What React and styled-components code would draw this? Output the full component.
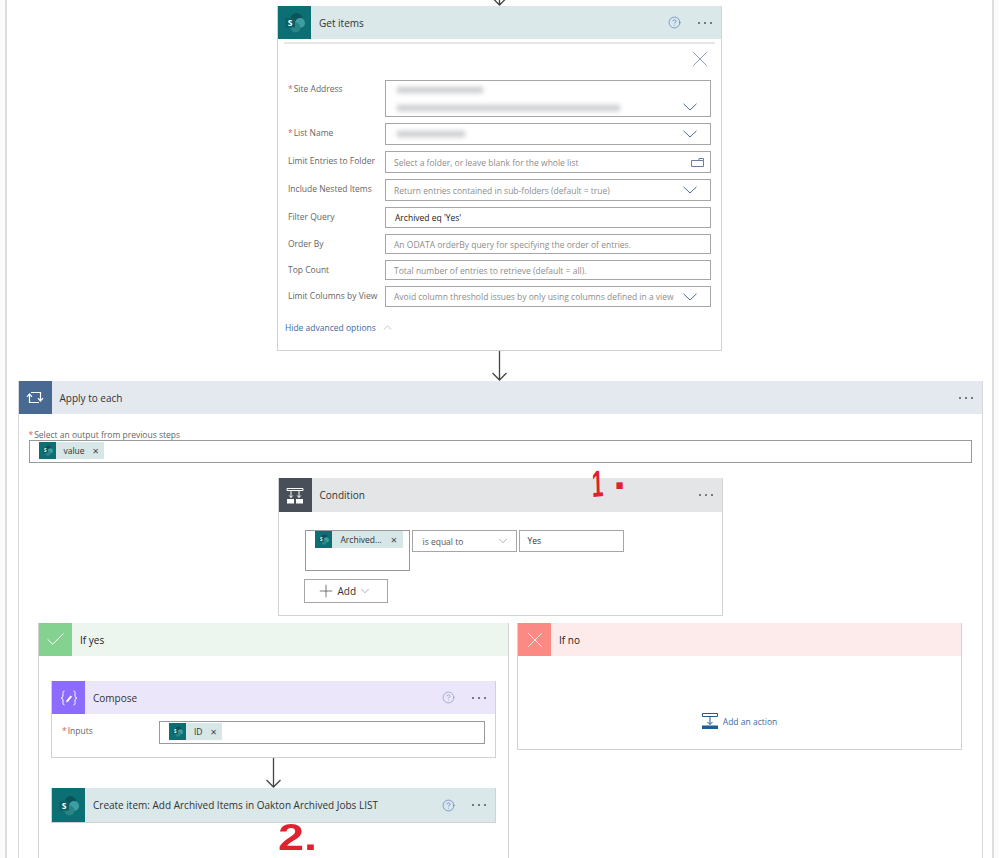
import styled, { createGlobalStyle } from "styled-components";
import { Check, ChevronDown, ChevronUp, CircleHelp, Plus, X } from "lucide-react";

const GlobalStyle = createGlobalStyle`
	html, body {
		margin: 0;
		padding: 0;
		background-color: #fbfbfb;
		font-family: "Open Sans", "Noto Sans", sans-serif;
		color: #333;
		overflow: hidden;
	}
`;

const SharePointIcon = ({ size }) => (
	<svg width={size} height={size} viewBox="0 0 33 33">
		<rect width="33" height="33" fill="#0c6f73" />
		<circle cx="18.5" cy="12.5" r="5.5" fill="#0a5358" />
		<circle cx="22" cy="17" r="5" fill="#3f9ea2" />
		<circle cx="17.5" cy="21.5" r="5" fill="#2a8589" />
		<rect x="7.5" y="12" width="9.5" height="9.5" fill="#0b5f63" />
		<text x="12.2" y="20" fontSize="8.5" fontWeight="700" fill="#fff" textAnchor="middle" fontFamily="Open Sans">S</text>
	</svg>
);

const LoopIcon = () => (
	<svg width="18" height="15" viewBox="0 0 18 15" fill="none" stroke="#fff" strokeWidth="1.2">
		<path d="M5 2.5h9.5v8" />
		<path d="M12 8.2l2.5 2.8 2.5-2.8" />
		<path d="M13 12.5H3.5v-8" />
		<path d="M1 6.8l2.5-2.8 2.5 2.8" />
	</svg>
);

const ConditionIcon = () => (
	<svg width="18" height="17" viewBox="0 0 18 17" fill="none" stroke="#fff" strokeWidth="1">
		<path d="M1 1.5h16v2H1z" />
		<path d="M5 3.5v7M13 3.5v7M3.2 8.5L5 10.5l1.8-2M11.2 8.5l1.8 2 1.8-2" />
		<rect x="1" y="12" width="7" height="4.5" fill="#fff" stroke="none" />
		<rect x="10" y="12" width="7" height="4.5" fill="#fff" stroke="none" />
	</svg>
);

const ComposeIcon = () => (
	<svg width="18" height="16" viewBox="0 0 18 16" fill="none" stroke="#fff" strokeWidth="1">
		<path d="M4.5 1C2.5 1 3 3 3 5S2.5 8 1 8c1.5 0 2 1 2 3s-.5 4 1.5 4" />
		<path d="M13.5 1c2 0 1.5 2 1.5 4s.5 3 2 3c-1.500 0-2 1-2 3s.5 4-1.500 4" />
		<path d="M6.500 10.500l4-5 1.500 1.200-4 5-2 .5z" fill="#fff" stroke="none" />
	</svg>
);

const FolderIcon = () => (
	<svg width="13" height="9" viewBox="0 0 13 9" fill="none" stroke="#6d7f96" strokeWidth="1">
		<path d="M.5 2.500h12v6H.5z" />
		<path d="M8 2.500V.5h4.500v2" />
	</svg>
);

const AddActionIcon = () => (
	<svg width="16" height="16" viewBox="0 0 16 16" fill="none" stroke="#1f5b94" strokeWidth="1">
		<path d="M.5 .5h15v3H.5z" />
		<path d="M8 3.500v8M5.500 9L8 11.500 10.500 9" />
		<rect y="12.500" width="16" height="3.500" fill="#1f5b94" stroke="none" />
	</svg>
);

const Arrow = ({ height }) => (
	<Connector $height={height}>
		<svg width="17" height="30" viewBox="0 0 17 30" fill="none" stroke="#444" strokeWidth="1.300">
			<path d="M8.500 0v29M1.500 22l7 7 7-7" />
		</svg>
	</Connector>
);

const Dots = () => (
	<MoreDots>
		<i />
		<i />
		<i />
	</MoreDots>
);

const Chevron = () => (
	<FieldChevron>
		<svg width="14" height="8" viewBox="0 0 14 8" fill="none" stroke="#4e6e96" strokeWidth="1">
			<path d="M.5 .8L7 7l6.500-6.200" />
		</svg>
	</FieldChevron>
);

const Token = ({ children, wide }) => (
	<TokenChip $wide={wide}>
		<SharePointIcon size={17} />
		<TokenText>{children}</TokenText>
		<TokenClose>×</TokenClose>
	</TokenChip>
);

const App = () => {
	return (
		<>
			<GlobalStyle />
			<Frame>
				<Arrow height={6} />
				<Card $width={445}>
					<CardHeader $bg="#dae8e9">
						<IconBox $bg="#0c6f73">
							<SharePointIcon size={33} />
						</IconBox>
						<CardTitle>Get items</CardTitle>
						<HelpButton>
							<CircleHelp size={13} strokeWidth={1.2} color="#4a72c4" />
						</HelpButton>
						<Dots />
					</CardHeader>
					<Divider />
					<CloseRow>
						<X size={26} strokeWidth={0.6} color="#4e6e96" />
					</CloseRow>
					<Form>
						<FormRow>
							<FieldLabel $top={2.5}>
								<Required>*</Required>Site Address
							</FieldLabel>
							<Field $height={37}>
								<BlurStack>
									<BlurBar $width={86} />
									<BlurBar $width={223} />
								</BlurStack>
								<SiteChevron>
									<Chevron />
								</SiteChevron>
							</Field>
						</FormRow>
						<FormRow>
							<FieldLabel>
								<Required>*</Required>List Name
							</FieldLabel>
							<Field $height={22}>
								<BlurBar $width={68} />
								<Chevron />
							</Field>
						</FormRow>
						<FormRow>
							<FieldLabel>Limit Entries to Folder</FieldLabel>
							<Field $height={22}>
								<Placeholder>Select a folder, or leave blank for the whole list</Placeholder>
								<FieldIcon>
									<FolderIcon />
								</FieldIcon>
							</Field>
						</FormRow>
						<FormRow>
							<FieldLabel>Include Nested Items</FieldLabel>
							<Field $height={22}>
								<Placeholder>Return entries contained in sub-folders (default = true)</Placeholder>
								<Chevron />
							</Field>
						</FormRow>
						<FormRow>
							<FieldLabel>Filter Query</FieldLabel>
							<Field $height={21}>
								<FieldValue>Archived eq 'Yes'</FieldValue>
							</Field>
						</FormRow>
						<FormRow>
							<FieldLabel>Order By</FieldLabel>
							<Field $height={20}>
								<Placeholder>An ODATA orderBy query for specifying the order of entries.</Placeholder>
							</Field>
						</FormRow>
						<FormRow>
							<FieldLabel>Top Count</FieldLabel>
							<Field $height={20}>
								<Placeholder>Total number of entries to retrieve (default = all).</Placeholder>
							</Field>
						</FormRow>
						<FormRow>
							<FieldLabel>Limit Columns by View</FieldLabel>
							<Field $height={21}>
								<Placeholder>Avoid column threshold issues by only using columns defined in a view</Placeholder>
								<Chevron />
							</Field>
						</FormRow>
					</Form>
					<AdvancedLink>
						Hide advanced options
						<ChevronUp size={13} strokeWidth={1} color="#8a9bb0" />
					</AdvancedLink>
				</Card>
				<Arrow height={30} />
				<ApplyBox>
					<CardHeader $bg="#e4e8ef">
						<IconBox $bg="#486991">
							<LoopIcon />
						</IconBox>
						<CardTitle>Apply to each</CardTitle>
						<Dots />
					</CardHeader>
					<ApplyBody>
						<OutputLabel>
							<Required>*</Required>Select an output from previous steps
						</OutputLabel>
						<TokenInput>
							<Token>value</Token>
						</TokenInput>
						<Card $width={445} $top={15} $height={138}>
							<CardHeader $bg="#e3e5e7" $height={34}>
								<IconBox $bg="#484f58">
									<ConditionIcon />
								</IconBox>
								<CardTitle>Condition</CardTitle>
								<Dots />
							</CardHeader>
							<ConditionRow>
								<ConditionToken>
									<Token wide>Archived...</Token>
								</ConditionToken>
								<ConditionSelect>
									is equal to
									<ChevronDown size={14} strokeWidth={1} color="#777" />
								</ConditionSelect>
								<ConditionValue>Yes</ConditionValue>
							</ConditionRow>
							<AddButton>
								<Plus size={20} strokeWidth={0.8} color="#333" />
								Add
								<ChevronDown size={14} strokeWidth={1} color="#777" />
							</AddButton>
						</Card>
						<Branches>
							<Branch $width={471}>
								<CardHeader $bg="#ecf6ee">
									<IconBox $bg="#84d28f">
										<Check size={23} strokeWidth={1} color="#fff" />
									</IconBox>
									<BranchTitle>If yes</BranchTitle>
								</CardHeader>
								<BranchBody>
									<Card $width={445}>
										<CardHeader $bg="#ece6fb">
											<IconBox $bg="#8c6cff">
												<ComposeIcon />
											</IconBox>
											<CardTitle>Compose</CardTitle>
											<HelpButton>
												<CircleHelp size={13} strokeWidth={1.2} color="#7a8fc4" />
											</HelpButton>
											<Dots />
										</CardHeader>
										<InputsRow>
											<InputsLabel>
												<Required>*</Required>Inputs
											</InputsLabel>
											<TokenInput $width={326}>
												<Token>ID</Token>
											</TokenInput>
										</InputsRow>
									</Card>
									<Arrow height={30} />
									<Card $width={445}>
										<CardHeader $bg="#dae8e9" $height={34}>
											<IconBox $bg="#0c6f73">
												<SharePointIcon size={33} />
											</IconBox>
											<CardTitle>Create item: Add Archived Items in Oakton Archived Jobs LIST</CardTitle>
											<HelpButton>
												<CircleHelp size={13} strokeWidth={1.2} color="#4a72c4" />
											</HelpButton>
											<Dots />
										</CardHeader>
									</Card>
								</BranchBody>
							</Branch>
							<Branch $width={445} $height={127}>
								<CardHeader $bg="#fdeaea">
									<IconBox $bg="#fb8a84">
										<X size={26} strokeWidth={0.8} color="#fff" />
									</IconBox>
									<BranchTitle>If no</BranchTitle>
								</CardHeader>
								<AddAction>
									<AddActionIcon />
									Add an action
								</AddAction>
							</Branch>
						</Branches>
					</ApplyBody>
				</ApplyBox>
				<ScribbleOne>
					<TallOne>1</TallOne>
					<RaisedDot>.</RaisedDot>
				</ScribbleOne>
				<ScribbleTwo>2.</ScribbleTwo>
			</Frame>
		</>
	);
};

const Frame = styled.div`
	position: relative;
	box-sizing: border-box;
	display: flex;
	flex-direction: column;
	align-items: center;
	width: 989px;
	height: 858px;
	margin-left: 5px;
	overflow: hidden;
	background-color: #fff;
	border-left: 2px solid #dedede;
	border-right: 2px solid #dedede;
`;

const Connector = styled.div`
	flex: none;
	display: flex;
	align-items: flex-end;
	justify-content: center;
	height: ${props => props.$height}px;
	overflow: hidden;
	svg {
		flex: none;
		display: block;
	}
`;

const Card = styled.section`
	flex: none;
	box-sizing: border-box;
	width: ${props => props.$width}px;
	${props => props.$height && `height: ${props.$height}px;`}
	margin-top: ${props => props.$top || 0}px;
	background-color: #fff;
	border: 1px solid #d2d2d2;
	border-top: none;
`;

const CardHeader = styled.header`
	display: flex;
	align-items: center;
	height: ${props => props.$height || 33}px;
	background-color: ${props => props.$bg};
`;

const IconBox = styled.div`
	flex: none;
	display: flex;
	align-items: center;
	justify-content: center;
	align-self: stretch;
	width: 33px;
	background-color: ${props => props.$bg};
`;

const CardTitle = styled.h3`
	flex: 1;
	margin: 0 0 0 8px;
	font-size: 10px;
	font-weight: 400;
	color: #333;
	white-space: nowrap;
`;

const BranchTitle = styled(CardTitle)`
	color: #222;
`;

const HelpButton = styled.span`
	display: flex;
	margin-right: 17px;
`;

const MoreDots = styled.span`
	display: flex;
	gap: 4px;
	margin-right: 9px;
	i {
		width: 2px;
		height: 2px;
		background-color: #555;
		border-radius: 50%;
	}
`;

const Divider = styled.div`
	height: 2px;
	margin: 3px 6px 0;
	background-color: #e6e6e6;
`;

const CloseRow = styled.div`
	display: flex;
	justify-content: flex-end;
	align-items: flex-start;
	height: 36px;
	padding: 2px 8px 0 0;
	box-sizing: border-box;
`;

const Form = styled.div`
	display: flex;
	flex-direction: column;
	gap: 6px;
	padding: 0 10px;
`;

const FormRow = styled.div`
	display: flex;
	align-items: flex-start;
`;

const FieldLabel = styled.label`
	flex: none;
	width: 97px;
	padding-top: ${props => props.$top || 3.5}px;
	font-size: 8.5px;
	line-height: 12px;
	color: #666;
	white-space: nowrap;
`;

const Required = styled.span`
	color: #c66;
	margin-right: 1px;
`;

const Field = styled.div`
	position: relative;
	flex: 1;
	box-sizing: border-box;
	display: flex;
	align-items: center;
	justify-content: space-between;
	height: ${props => props.$height}px;
	padding: 0 13px 0 8px;
	border: 1px solid #a6a6a6;
`;

const Placeholder = styled.span`
	font-size: 8.5px;
	color: #8d8d8d;
	white-space: nowrap;
`;

const FieldValue = styled.span`
	margin-left: 1px;
	font-size: 8.5px;
	color: #222;
`;

const FieldChevron = styled.span`
	display: flex;
`;

const SiteChevron = styled.span`
	position: absolute;
	right: 13px;
	bottom: 5px;
`;

const FieldIcon = styled.span`
	display: flex;
	margin-right: -7px;
`;

const BlurStack = styled.div`
	display: flex;
	flex-direction: column;
	gap: 12px;
`;

const BlurBar = styled.div`
	width: ${props => props.$width}px;
	height: 6px;
	margin-left: 3px;
	background-color: #c8cacc;
	filter: blur(2.5px);
`;

const AdvancedLink = styled.div`
	display: flex;
	align-items: center;
	gap: 5px;
	height: 14px;
	margin: 13px 0 16px 7px;
	font-size: 8.5px;
	color: #3a6aa5;
`;

const ApplyBox = styled.section`
	flex: none;
	box-sizing: border-box;
	width: 965px;
	margin-left: 1px;
	border: 1px solid #d8d8d8;
	border-top: none;
	background-color: #fff;
`;

const ApplyBody = styled.div`
	display: flex;
	flex-direction: column;
	align-items: center;
	padding: 15px 10px 60px;
`;

const OutputLabel = styled.div`
	align-self: flex-start;
	height: 11px;
	font-size: 8.5px;
	line-height: 11px;
	color: #666;
`;

const TokenInput = styled.div`
	flex: none;
	box-sizing: border-box;
	display: flex;
	align-items: flex-start;
	width: ${props => (props.$width ? `${props.$width}px` : "100%")};
	height: 23px;
	padding: 1px 9px;
	border: 1px solid #999;
`;

const TokenChip = styled.div`
	display: inline-flex;
	align-items: center;
	gap: ${props => (props.$wide ? "9px" : "8px")};
	height: 17px;
	padding-right: ${props => (props.$wide ? "6px" : "5px")};
	background-color: #d7e6e7;
`;

const TokenText = styled.span`
	font-size: 8.5px;
	color: #333;
`;

const TokenClose = styled.span`
	font-size: 11px;
	line-height: 11px;
	color: #444;
`;

const ConditionRow = styled.div`
	display: flex;
	align-items: flex-start;
	gap: 2px;
	padding: 18px 0 0 26px;
`;

const ConditionToken = styled.div`
	box-sizing: border-box;
	width: 105px;
	height: 41px;
	padding: 0 0 0 9px;
	border: 1px solid #999;
`;

const ConditionSelect = styled.div`
	box-sizing: border-box;
	display: flex;
	align-items: center;
	justify-content: space-between;
	width: 105px;
	height: 22px;
	padding: 0 6px 0 10px;
	font-size: 8.5px;
	color: #555;
	border: 1px solid #a6a6a6;
`;

const ConditionValue = styled(ConditionSelect)`
	color: #333;
	padding: 0 0 2px 8px;
`;

const AddButton = styled.div`
	box-sizing: border-box;
	display: flex;
	align-items: center;
	gap: 2px;
	width: 84px;
	height: 24px;
	margin: 8px 0 0 25px;
	padding-left: 11px;
	font-size: 10px;
	color: #333;
	border: 1px solid #a6a6a6;
`;

const Branches = styled.div`
	display: flex;
	align-items: flex-start;
	gap: 8px;
	margin-top: 7px;
`;

const Branch = styled.section`
	flex: none;
	box-sizing: border-box;
	width: ${props => props.$width}px;
	${props => props.$height && `height: ${props.$height}px;`}
	border: 1px solid #d2d2d2;
	border-top: none;
`;

const BranchBody = styled.div`
	display: flex;
	flex-direction: column;
	align-items: center;
	padding: 25px 0 40px;
`;

const InputsRow = styled.div`
	display: flex;
	align-items: flex-start;
	height: 43px;
	padding: 7px 0 0 10px;
	box-sizing: border-box;
`;

const InputsLabel = styled.div`
	width: 97px;
	padding-top: 4px;
	font-size: 8.5px;
	color: #666;
`;

const AddAction = styled.div`
	display: flex;
	justify-content: center;
	align-items: center;
	gap: 5px;
	padding-top: 57px;
	font-size: 8.5px;
	color: #3a6aa5;
`;

const Scribble = styled.span`
	position: absolute;
	font-family: "Liberation Sans", sans-serif;
	font-weight: 700;
	color: #e0222e;
`;

const ScribbleOne = styled(Scribble)`
	display: flex;
	align-items: baseline;
	left: 585px;
	top: 462px;
	line-height: 40px;
`;

const TallOne = styled.span`
	display: inline-block;
	font-size: 37px;
	transform: scaleX(0.55) rotate(-3deg);
	transform-origin: left;
`;

const RaisedDot = styled.span`
	position: relative;
	top: -8px;
	margin-left: 1px;
	font-size: 44px;
`;

const ScribbleTwo = styled(Scribble)`
	left: 271px;
	top: 820px;
	font-size: 36px;
	line-height: 36px;
	transform: scaleX(1.3);
	transform-origin: left;
`;

export default App;
